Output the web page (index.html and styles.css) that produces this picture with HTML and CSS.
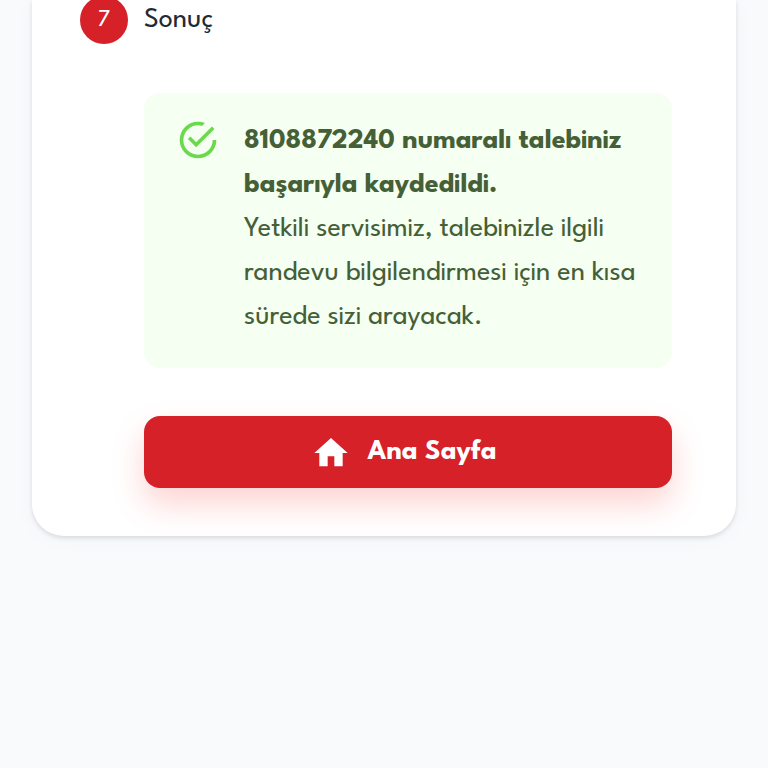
FILE: index.html
```html
<!DOCTYPE html>
<html lang="tr">
<head>
    <meta charset="UTF-8">
    <meta name="viewport" content="width=device-width, initial-scale=1.0">
    <title>Sonuç</title>
    <link rel="stylesheet" href="styles.css">
</head>
<body>
    <main class="card">
        <!-- Adım başlığı -->
        <div class="step-header">
            <span class="step-number">7</span>
            <h2 class="step-title">Sonuç</h2>
        </div>

        <div class="step-content">
            <!-- Başarı mesajı -->
            <div class="alert">
                <svg class="alert-icon" viewBox="0 0 24 24" aria-hidden="true">
                    <path d="M20,12A8,8 0 0,1 12,20A8,8 0 0,1 4,12A8,8 0 0,1 12,4C12.76,4 13.5,4.11 14.2,4.31L15.77,2.74C14.61,2.26 13.34,2 12,2A10,10 0 0,0 2,12A10,10 0 0,0 12,22A10,10 0 0,0 22,12M7.91,10.08L6.5,11.5L11,16L21,6L19.59,4.58L11,13.17L7.91,10.08Z"/>
                </svg>
                <div class="alert-message">
                    <strong class="line">8108872240 numaralı talebiniz</strong>
                    <strong class="line">başarıyla kaydedildi.</strong>
                    <span class="line">Yetkili servisimiz, talebinizle ilgili</span>
                    <span class="line">randevu bilgilendirmesi için en kısa</span>
                    <span class="line">sürede sizi arayacak.</span>
                </div>
            </div>

            <button type="button" class="home-button">
                <svg class="home-icon" viewBox="0 0 24 24" aria-hidden="true">
                    <path d="M10 20v-6h4v6h5v-8h3L12 3 2 12h3v8z"/>
                </svg>
                <span class="home-label">Ana Sayfa</span>
            </button>
        </div>
    </main>
</body>
</html>
```

FILE: styles.css
```css
/* Genel stiller */
* {
    box-sizing: border-box;
}

body {
    margin: 0;
    padding: 0 32px;
    height: 768px;
    overflow: hidden;
    background-color: #f9fafc;
    font-family: 'League Spartan', Lato, 'Open Sans', sans-serif;
    color: #212b36;
}

/* Kart */
.card {
    display: flex;
    flex-direction: column;
    height: 536px;
    padding: 0 64px 48px 48px;
    background: white;
    border-radius: 0 0 32px 32px;
    box-shadow: 0 2px 4px rgba(100, 110, 110, 0.2), 0 4px 16px rgba(145, 158, 171, 0.06);
}

/* Adım başlığı */
.step-header {
    display: flex;
    align-items: center;
    gap: 16px;
    height: 48px;
    margin-top: -4px;
}

.step-number {
    width: 48px;
    height: 48px;
    border-radius: 50%;
    background-color: #d62128;
    color: white;
    font-size: 24px;
    line-height: 48px;
    text-align: center;
}

.step-title {
    margin: 0;
    font-size: 28px;
    font-weight: 400;
    line-height: 44px;
}

.step-content {
    padding: 49px 0 0 64px;
}

/* Başarı mesajı */
.alert {
    display: flex;
    gap: 24px;
    height: 275px;
    padding: 25px 32px;
    border-radius: 16px;
    background-color: #f5fff2;
    color: #456036;
}

.alert-icon {
    width: 44px;
    height: 44px;
    fill: #6bd94e;
    flex-shrink: 0;
}

.alert-message {
    padding-top: 2px;
    font-size: 28px;
    line-height: 43.9px;
}

.line {
    display: block;
    white-space: nowrap;
}

/* Düğme */
.home-button {
    display: flex;
    align-items: center;
    justify-content: center;
    gap: 16px;
    width: 528px;
    height: 72px;
    margin-top: 48px;
    padding: 0;
    border: none;
    border-radius: 16px;
    background-color: #d62128;
    box-shadow: 0 16px 32px rgba(240, 60, 50, 0.22);
    color: white;
    font-family: inherit;
    font-size: 28px;
    font-weight: 700;
}

.home-icon {
    width: 40px;
    height: 40px;
    margin-top: 1px;
    margin-left: -8px;
    fill: white;
}

.home-label {
    white-space: nowrap;
}
```
